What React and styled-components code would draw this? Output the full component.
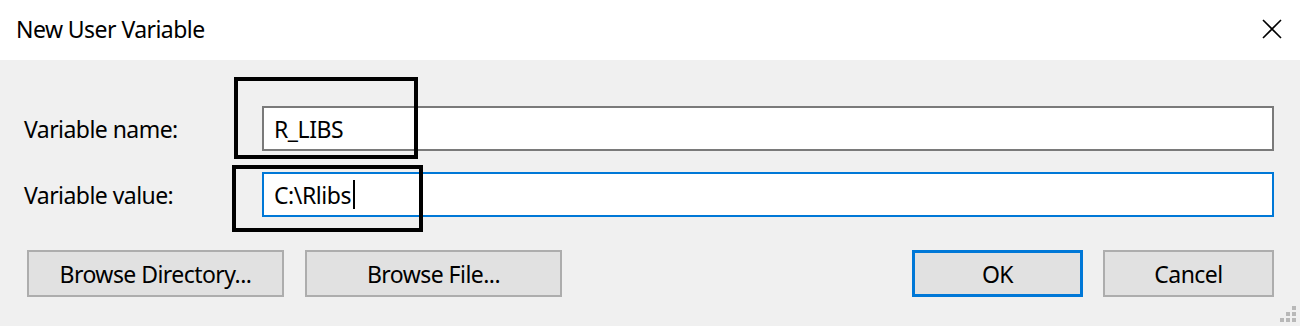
import React from 'react';
import styled, { createGlobalStyle } from 'styled-components';

const GlobalStyle = createGlobalStyle`
   html, body {
      margin: 0;
      padding: 0;
      background: #f0f0f0;
   }
   body {
      font-family: 'Noto Sans', 'Open Sans', sans-serif;
      color: #000;
   }
`;

const App = () => {
   return (
      <>
         <GlobalStyle />
         <Window>
            <TitleBar>
               <Title>New User Variable</Title>
               <CloseButton aria-label='Close'>
                  <svg width='20' height='20' viewBox='0 0 20 20'>
                     <path d='M1 1 L19 19 M19 1 L1 19' stroke='#000' strokeWidth='1.6' fill='none' />
                  </svg>
               </CloseButton>
            </TitleBar>
            <Body>
               <Form>
                  <Label>Variable name:</Label>
                  <Field>R_LIBS</Field>
                  <Label>Variable value:</Label>
                  <Field focused>
                     C:\Rlibs
                     <Caret />
                  </Field>
               </Form>
               <Buttons>
                  <Group gap='21px'>
                     <Button>Browse Directory...</Button>
                     <Button>Browse File...</Button>
                  </Group>
                  <Group gap='20px'>
                     <Button small isDefault>
                        OK
                     </Button>
                     <Button small>Cancel</Button>
                  </Group>
               </Buttons>
            </Body>
            <Highlight style={{ left: 234, top: 77, width: 184, height: 82 }} />
            <Highlight style={{ left: 232, top: 165, width: 191, height: 67 }} />
            <Grip>
               {[
                  [12, 0],
                  [6, 6],
                  [12, 6],
                  [0, 12],
                  [6, 12],
                  [12, 12],
               ].map(([x, y]) => (
                  <Dot key={`${x}-${y}`} style={{ left: x, top: y }} />
               ))}
            </Grip>
         </Window>
      </>
   );
};

const Window = styled.div`
   position: relative;
   width: 1300px;
   height: 326px;
   background: #f0f0f0;
   overflow: hidden;
`;

const TitleBar = styled.div`
   height: 60px;
   background: #fff;
   display: flex;
   align-items: center;
   justify-content: space-between;
   padding: 0 18px 2px 16px;
   box-sizing: border-box;
`;

const Title = styled.span`
   font-size: 23px;
   letter-spacing: -0.55px;
`;

const CloseButton = styled.div`
   width: 20px;
   height: 20px;
   display: flex;
`;

const Body = styled.div`
   padding: 46px 26px 0 24px;
`;

const Form = styled.div`
   display: grid;
   grid-template-columns: 238px 1fr;
   row-gap: 21px;
   align-items: center;
`;

const Label = styled.div`
   font-size: 23px;
   letter-spacing: -0.55px;
`;

const Field = styled.div`
   height: 45px;
   box-sizing: border-box;
   background: #fff;
   border: 2px solid ${(p) => (p.focused ? '#0078d7' : '#7a7a7a')};
   display: flex;
   align-items: center;
   padding-left: 10px;
   font-size: 23px;
   letter-spacing: -0.45px;
`;

const Caret = styled.span`
   display: inline-block;
   width: 2px;
   height: 29px;
   background: #000;
   margin-left: 2px;
`;

const Buttons = styled.div`
   display: flex;
   justify-content: space-between;
   margin-top: 33px;
   padding-left: 3px;
`;

const Group = styled.div`
   display: flex;
   gap: ${(p) => p.gap};
`;

const Button = styled.div`
   width: ${(p) => (p.small ? '171px' : '257px')};
   height: 47px;
   box-sizing: border-box;
   background: #e1e1e1;
   border: ${(p) => (p.isDefault ? '3px solid #0078d7' : '2px solid #adadad')};
   display: flex;
   align-items: center;
   justify-content: center;
   font-size: 23px;
   letter-spacing: -0.55px;
`;

const Highlight = styled.div`
   position: absolute;
   box-sizing: border-box;
   border: 4px solid #000;
   pointer-events: none;
`;

const Grip = styled.div`
   position: absolute;
   right: 4px;
   bottom: 4px;
   width: 16px;
   height: 16px;
`;

const Dot = styled.span`
   position: absolute;
   width: 4px;
   height: 4px;
   background: #b8b8b8;
`;

export default App;
